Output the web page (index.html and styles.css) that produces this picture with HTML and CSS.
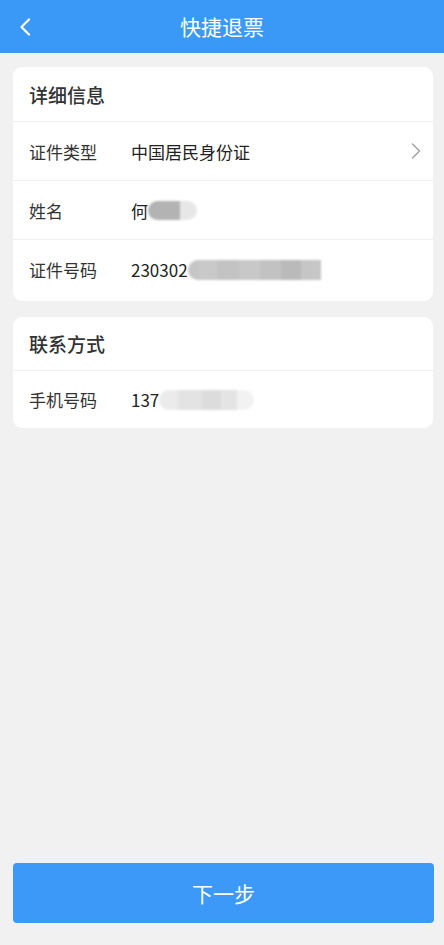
FILE: index.html
```html
<!DOCTYPE html>
<html lang="zh-CN">
<head>
    <meta charset="UTF-8">
    <meta name="viewport" content="width=device-width, initial-scale=1.0">
    <title>快捷退票</title>
    <link rel="stylesheet" href="styles.css">
</head>
<body>
    <header class="topbar">
        <button class="back" aria-label="返回">
            <svg width="14" height="18" viewBox="0 0 14 18"><path d="M11 1.5 L3.5 9 L11 16.5" fill="none" stroke="#fff" stroke-width="2.2" stroke-linecap="round" stroke-linejoin="round"/></svg>
        </button>
        <h1>快捷退票</h1>
    </header>

    <main class="content">
        <section class="card">
            <h2 class="card-title">详细信息</h2>
            <div class="row">
                <span class="label">证件类型</span>
                <span class="value">中国居民身份证</span>
                <svg class="arrow" width="10" height="16" viewBox="0 0 10 16"><path d="M1.5 1 L8.5 8 L1.5 15" fill="none" stroke="#a0a0a0" stroke-width="1.4" stroke-linecap="round" stroke-linejoin="round"/></svg>
            </div>
            <div class="row">
                <span class="label">姓名</span>
                <span class="value">何<span class="mask mask-name"></span></span>
            </div>
            <div class="row row-last">
                <span class="label">证件号码</span>
                <span class="value">230302<span class="mask mask-id"></span></span>
            </div>
        </section>

        <section class="card">
            <h2 class="card-title card-title-sm">联系方式</h2>
            <div class="row row-sm">
                <span class="label">手机号码</span>
                <span class="value">137<span class="mask mask-phone"></span></span>
            </div>
        </section>
    </main>

    <footer class="actions">
        <button class="next">下一步</button>
    </footer>
</body>
</html>
```

FILE: styles.css
```css
body {
    margin: 0;
    padding: 0;
    font-family: "Noto Sans CJK SC", "Noto Sans", sans-serif;
    background-color: #f1f1f1;
    color: #333;
    display: flex;
    flex-direction: column;
    min-height: 945px;
}

.topbar {
    height: 53px;
    background-color: #3a98f7;
    display: flex;
    align-items: center;
    justify-content: center;
    position: relative;
}

.topbar h1 {
    margin: 0;
    font-size: 21px;
    font-weight: normal;
    color: #fff;
    line-height: 1;
}

.back {
    position: absolute;
    left: 16px;
    top: 18px;
    background: none;
    border: none;
    padding: 0;
    width: 18px;
    height: 18px;
}

.content {
    flex: 1;
    padding: 14px 11px 0 13px;
    display: flex;
    flex-direction: column;
    gap: 16px;
}

.card {
    background: #fff;
    border-radius: 9px;
    overflow: hidden;
}

.card-title {
    margin: 0;
    height: 55px;
    padding: 0 16px;
    display: flex;
    align-items: center;
    font-size: 19px;
    font-weight: 500;
    color: #333;
    border-bottom: 1px solid #efefef;
    box-sizing: border-box;
}

.card-title-sm {
    height: 54px;
}

.row {
    height: 58px;
    padding: 0 12px 0 16px;
    display: flex;
    align-items: center;
    border-bottom: 1px solid #efefef;
}

.row:last-child {
    border-bottom: none;
}

.row-last {
    height: 61px;
    padding-bottom: 2px;
    box-sizing: border-box;
}

.row-sm {
    height: 57px;
}

.label {
    width: 102px;
    font-size: 17px;
    color: #333;
}

.value {
    flex: 1;
    font-size: 17px;
    color: #222;
    display: flex;
    align-items: center;
}

.mask {
    display: inline-block;
    height: 20px;
    filter: blur(0.8px);
}

.mask-name {
    width: 49px;
    height: 19px;
    border-radius: 10px;
    background: linear-gradient(to right, #b3b3b3 0 65%, #e7e7e7 65% 100%);
}

.mask-id {
    width: 133px;
    margin-left: 0;
    border-radius: 10px 0 0 10px;
    background: linear-gradient(to right,
        #c6c6c6 0 8%, #c9c9c9 8% 22%, #c3c3c3 22% 38%,
        #c8c8c8 38% 54%, #c2c2c2 54% 70%, #bababa 70% 85%, #c6c6c6 85% 100%);
}

.mask-phone {
    width: 95px;
    margin-left: 0;
    border-radius: 10px;
    background: linear-gradient(to right,
        #ebebeb 0 20%, #e3e3e3 20% 45%, #dcdcdc 45% 65%, #e4e4e4 65% 82%, #f2f2f2 82% 100%);
}

.actions {
    padding: 0 10px 22px 13px;
}

.next {
    width: 100%;
    height: 60px;
    border: none;
    border-radius: 4px;
    background-color: #3d99f8;
    color: #fff;
    font-family: inherit;
    font-size: 21px;
    cursor: pointer;
}
```
